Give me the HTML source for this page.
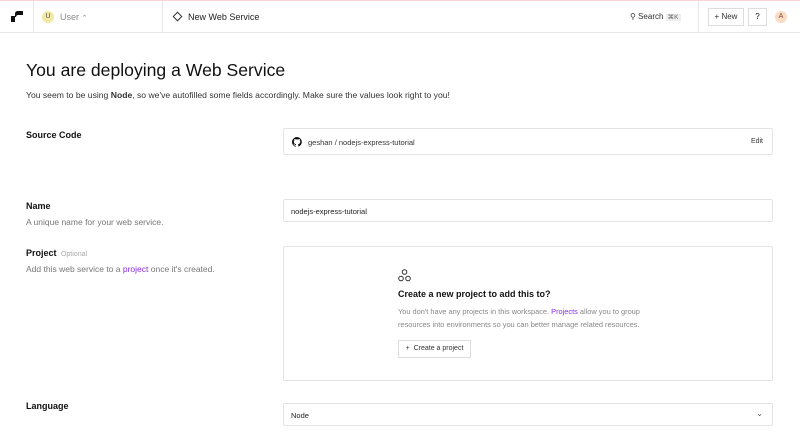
<!DOCTYPE html>
<html><head><meta charset="utf-8"><style>
*{box-sizing:border-box;margin:0;padding:0}
body{width:800px;height:434px;overflow:hidden;background:#fff;font-family:"Liberation Sans",sans-serif;color:#111;position:relative}
.a{position:absolute}
.nav{top:0;left:0;width:800px;height:33px;border-top:1px solid #f6d4d4;border-bottom:1px solid #e8e8e8}
.vl{position:absolute;top:0;height:32px;width:1px;background:#e8e8e8}
.box{position:absolute;border:1px solid #e3e3e3;border-radius:2px;background:#fff}
.lbl{font-size:9px;font-weight:bold;color:#111}
.sub{font-size:8.5px;color:#777}
.t8{font-size:7.5px}
</style></head><body>
<div class="a nav">
 <div class="vl" style="left:33px"></div>
 <div class="vl" style="left:162px"></div>
 <div class="vl" style="left:698px"></div>
 <svg class="a" style="left:11px;top:10px" width="12" height="11" viewBox="0 0 12 11"><path d="M0 5h4v6H0z M4 3c0-2 1-3 3-3h5v4H7c-1 0-2 1-2 2H4z" fill="#111"/></svg>
 <div class="a" style="left:42px;top:10px;width:12px;height:12px;border-radius:50%;background:#f3e9a6;font-size:7px;text-align:center;line-height:12px;color:#555">U</div>
 <div class="a" style="left:60px;top:11px;font-size:9px;color:#888">User <span style="font-size:7px">⌃</span></div>
 <div class="a" style="left:174px;top:12px;width:7px;height:7px;border:1px solid #333;transform:rotate(45deg)"></div>
 <div class="a" style="left:188px;top:11px;font-size:9px;color:#222">New Web Service</div>
 <div class="a" style="left:630px;top:11px;font-size:8px;color:#333">⚲ Search <span style="background:#eee;font-size:6.5px;padding:0 2px;color:#666">⌘K</span></div>
 <div class="a" style="left:708px;top:7px;width:36px;height:18px;border:1px solid #ddd;font-size:8px;text-align:center;line-height:16px;color:#333">+ New</div>
 <div class="a" style="left:748px;top:7px;width:19px;height:18px;border:1px solid #ddd;font-size:8px;text-align:center;line-height:16px">?</div>
 <div class="a" style="left:775px;top:10px;width:12px;height:12px;border-radius:50%;background:#f8dcc4;font-size:7px;text-align:center;line-height:12px;color:#844">A</div>
</div>
<div class="a" style="left:26px;top:60px;font-size:17.6px;color:#111">You are deploying a Web Service</div>
<div class="a" style="left:26px;top:90px;font-size:8.6px;color:#333">You seem to be using <b>Node</b>, so we've autofilled some fields accordingly. Make sure the values look right to you!</div>
<div class="a lbl" style="left:26px;top:130px">Source Code</div>
<div class="box" style="left:283px;top:128px;width:490px;height:27px">
 <svg class="a" style="left:8px;top:8px" width="10" height="10" viewBox="0 0 16 16"><path fill="#111" d="M8 0a8 8 0 0 0-2.5 15.6c.4 0 .5-.2.5-.4v-1.5c-2.200.5-2.7-1-2.7-1-.4-.9-.9-1.2-.9-1.2-.7-.5.1-.5.1-.5.8.1 1.2.8 1.2.8.7 1.3 1.9.9 2.4.7 0-.5.3-.9.5-1.1-1.8-.2-3.6-.9-3.6-4 0-.9.3-1.6.8-2.100-.1-.2-.4-1 .1-2.1 0 0 .7-.2 2.2.8a7.4 7.4 0 0 1 4 0c1.5-1 2.2-.8 2.2-.8.4 1.1.2 1.9.1 2.1.5.6.8 1.3.8 2.1 0 3.1-1.9 3.7-3.6 3.9.3.3.5.8.5 1.5v2.2c0 .2.1.5.6.4A8 8 0 0 0 8 0z"/></svg>
 <div class="a t8" style="left:24px;top:9px;color:#333">geshan / nodejs-express-tutorial</div>
 <div class="a" style="right:9px;top:9px;font-size:7px;color:#333">Edit</div>
</div>
<div class="a lbl" style="left:26px;top:201px">Name</div>
<div class="a sub" style="left:26px;top:217px">A unique name for your web service.</div>
<div class="box" style="left:283px;top:199px;width:490px;height:23px"><div class="a t8" style="left:7px;top:7px;color:#222">nodejs-express-tutorial</div></div>
<div class="a lbl" style="left:26px;top:248px">Project <span style="font-weight:normal;font-size:7px;color:#aaa">&nbsp;Optional</span></div>
<div class="a sub" style="left:26px;top:264px">Add this web service to a <span style="color:#8a2be2">project</span> once it's created.</div>
<div class="box" style="left:283px;top:246px;width:490px;height:135px">
 <svg class="a" style="left:114px;top:22px" width="13" height="13" viewBox="0 0 13 13" fill="none" stroke="#333" stroke-width="1"><circle cx="6.5" cy="3" r="2.3"/><circle cx="3" cy="9.5" r="2.3"/><circle cx="10" cy="9.5" r="2.3"/></svg>
 <div class="a" style="left:114px;top:42px;font-size:9px;font-weight:bold">Create a new project to add this to?</div>
 <div class="a" style="left:114px;top:59px;font-size:7.4px;color:#888;line-height:12.5px;width:265px">You don't have any projects in this workspace. <span style="color:#8a2be2">Projects</span> allow you to group resources into environments so you can better manage related resources.</div>
 <div class="a" style="left:114px;top:93px;width:73px;height:18px;border:1px solid #ddd;font-size:7px;line-height:16px;text-align:center;color:#333">+&nbsp; Create a project</div>
</div>
<div class="a lbl" style="left:26px;top:401px">Language</div>
<div class="box" style="left:283px;top:403px;width:490px;height:23px"><div class="a t8" style="left:7px;top:7px;color:#222">Node</div><div class="a" style="right:9px;top:5px;font-size:8px;color:#555">⌄</div></div>
</body></html>
